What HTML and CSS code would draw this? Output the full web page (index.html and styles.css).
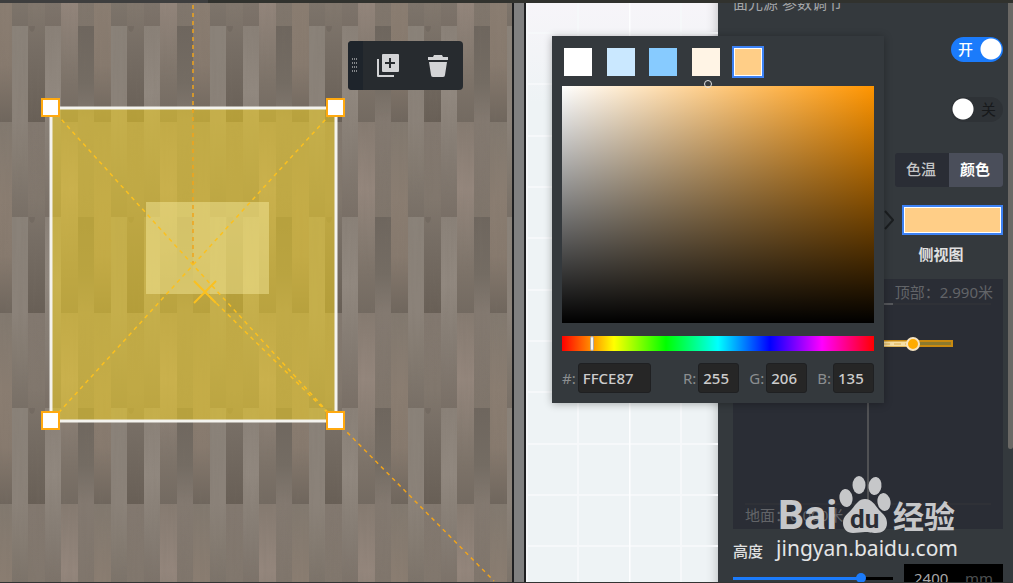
FILE: index.html
```
<!DOCTYPE html>
<html lang="zh-CN">

<head>
  <meta charset="utf-8">
  <title>面光源 参数调节</title>
  <link rel="stylesheet" href="styles.css">
</head>

<body>
  <div class="topbar"></div>
  <main class="workspace">
    <section class="plan">
      <svg class="plan-canvas" width="100%" height="100%">
        <defs>
          <linearGradient id="woodA" x2="0" y2="1">
            <stop offset="0" stop-color="#8a8178" />
            <stop offset="0.35" stop-color="#91887f" />
            <stop offset="0.65" stop-color="#867d74" />
            <stop offset="1" stop-color="#796f66" />
          </linearGradient>
          <linearGradient id="woodB" x2="0" y2="1">
            <stop offset="0" stop-color="#867b71" />
            <stop offset="0.35" stop-color="#94867c" />
            <stop offset="0.6" stop-color="#877c72" />
            <stop offset="0.8" stop-color="#7c7268" />
            <stop offset="1" stop-color="#736a61" />
          </linearGradient>
          <linearGradient id="woodC" x2="0" y2="1">
            <stop offset="0" stop-color="#6e665e" />
            <stop offset="0.3" stop-color="#746c63" />
            <stop offset="0.5" stop-color="#837970" />
            <stop offset="1" stop-color="#7f756b" />
          </linearGradient>
          <linearGradient id="woodD" x2="0" y2="1">
            <stop offset="0" stop-color="#82796f" />
            <stop offset="0.4" stop-color="#8a7d71" />
            <stop offset="0.7" stop-color="#877a6e" />
            <stop offset="1" stop-color="#6f665d" />
          </linearGradient>
          <linearGradient id="woodE" x2="0" y2="1">
            <stop offset="0" stop-color="#8a8279" />
            <stop offset="0.5" stop-color="#8b8279" />
            <stop offset="0.7" stop-color="#857c72" />
            <stop offset="1" stop-color="#786f66" />
          </linearGradient>
          <linearGradient id="woodF" x2="0" y2="1">
            <stop offset="0" stop-color="#82786f" />
            <stop offset="0.4" stop-color="#81776d" />
            <stop offset="0.6" stop-color="#776e65" />
            <stop offset="1" stop-color="#685f56" />
          </linearGradient>
          <pattern id="wood" x="45" y="23" width="99" height="191" patternUnits="userSpaceOnUse">
            <rect width="17" height="191" fill="url(#woodA)" />
            <rect x="16" y="-95" width="17" height="191" fill="url(#woodB)" />
            <rect x="16" y="96" width="17" height="191" fill="url(#woodB)" />
            <rect x="33" width="16" height="191" fill="url(#woodC)" />
            <rect x="49" y="-95" width="17" height="191" fill="url(#woodD)" />
            <rect x="49" y="96" width="17" height="191" fill="url(#woodD)" />
            <rect x="66" width="16" height="191" fill="url(#woodE)" />
            <rect x="82" y="-95" width="17" height="191" fill="url(#woodF)" />
            <rect x="82" y="96" width="17" height="191" fill="url(#woodF)" />
            <ellipse cx="86" cy="1" rx="3" ry="5" fill="#5d544c" opacity="0.25" />
          </pattern>
          <filter id="grain" x="0" y="0" width="100%" height="100%">
            <feTurbulence type="fractalNoise" baseFrequency="0.3 0.015" numOctaves="3" seed="4" />
            <feColorMatrix values="0 0 0 0 0.2  0 0 0 0 0.17  0 0 0 0 0.14  0.9 0 0 0 -0.33" />
          </filter>
        </defs>
        <rect width="100%" height="100%" fill="url(#wood)" />
        <rect width="100%" height="100%" filter="url(#grain)" opacity="0.3" />

        <rect class="light-area" x="51" y="105" width="285" height="313" />
        <rect class="light-source" x="146" y="199" width="123" height="92" />
        <g class="guides">
          <path class="axis" d="M193 2V262" />
          <path d="M51 105L193 262L336 418" />
          <path d="M336 105L51 418" />
          <path d="M205 289L336 418" />
          <path class="axis" d="M336 418L494 578" />
        </g>
        <path class="target" d="M194 278l22 22M216 278l-22 22" />
        <g class="handles">
          <rect x="42" y="96" width="17" height="17" />
          <rect x="327" y="96" width="17" height="17" />
          <rect x="42" y="409" width="17" height="17" />
          <rect x="327" y="409" width="17" height="17" />
        </g>
      </svg>

      <div class="toolbar">
        <span class="grip">
          <svg width="7" height="16" viewBox="0 0 7 16">
            <path d="M0 1h6M0 5h6M0 9h6M0 13h6" />
          </svg>
        </span>
        <button type="button" aria-label="复制">
          <svg width="24" height="24" viewBox="0 0 24 24">
            <path fill-rule="evenodd" d="M7 0h15a1 1 0 0 1 1 1v16a1 1 0 0 1-1 1H7a1 1 0 0 1-1-1V1a1 1 0 0 1 1-1zM13 4v4H9v2h4v4h2v-4h4V8h-4V4z" />
            <path d="M1 5h2v16h15v2H2a1 1 0 0 1-1-1z" />
          </svg>
        </button>
        <button type="button" aria-label="删除">
          <svg width="24" height="24" viewBox="0 0 24 24">
            <path d="M2 3h5l1-2h8l1 2h5v3H2z" />
            <path d="M3 8h18l-2 13a2 2 0 0 1-2 2H7a2 2 0 0 1-2-2z" />
          </svg>
        </button>
      </div>
    </section>

    <div class="divider"></div>

    <section class="preview">
      <svg width="100%" height="100%">
        <defs>
          <pattern id="grid" x="103" y="80" width="154" height="154" patternUnits="userSpaceOnUse">
            <path d="M0 1h154M0 53h154M0 104h154M52 0v154M103 0v154" stroke="#f6f8fa" stroke-width="2" />
            <path d="M0 0v154" stroke="#fdfeff" stroke-width="3" />
          </pattern>
        </defs>
        <rect width="100%" height="100%" fill="url(#grid)" />
      </svg>
    </section>

    <aside class="panel">
      <h2>面光源 参数调节</h2>
      <label class="switch">
        <input type="checkbox" aria-label="开" checked>
        <span>开</span>
      </label>
      <label class="switch">
        <input type="checkbox" aria-label="关">
        <span>关</span>
      </label>
      <div class="tabs">
        <label><input type="radio" name="mode"><span>色温</span></label>
        <label><input type="radio" name="mode" checked><span>颜色</span></label>
      </div>
      <div class="color-row">
        <svg width="10" height="20" viewBox="0 0 10 20">
          <path d="M1 1l8 9l-8 9" />
        </svg>
        <button type="button" class="color-button" aria-label="颜色"></button>
      </div>
      <h3>侧视图</h3>
      <div class="side-view">
        <svg width="100%" height="100%">
          <path d="M12 25h246M12 225h246" stroke="#35363a" />
          <path d="M110 25h50" stroke="#55575b" stroke-width="2" />
          <path d="M135 25v200" stroke="#505154" stroke-width="2" />
          <rect x="51" y="62" width="168" height="5" fill="#8c7a2e" stroke="#c98a10" stroke-width="2" />
          <path d="M95 65h80" stroke="#f6dfa5" stroke-width="5" />
          <path d="M95 65h80" stroke="#dcae4c" stroke-width="1" stroke-dasharray="7 4" />
          <circle cx="180" cy="65" r="6" fill="#ffab00" stroke="#f6e3c0" stroke-width="2" />
        </svg>
        <span class="ceiling">顶部：2.990米</span>
        <span class="ground">地面：0.000米</span>
      </div>
      <label class="height-label" for="height">高度</label>
      <div class="height-row">
        <input type="range" class="height-range" min="0" max="3000" value="2460" aria-label="高度">
        <div class="height-field">
          <input type="text" id="height" value="2400">
          <span>mm</span>
        </div>
      </div>
    </aside>
    <div class="scrollbar"><div class="scroll-thumb"></div></div>

    <div class="picker">
      <div class="swatches">
        <button type="button" class="white" aria-label="白色"></button>
        <button type="button" class="ice" aria-label="浅蓝"></button>
        <button type="button" class="sky" aria-label="天蓝"></button>
        <button type="button" class="cream" aria-label="米色"></button>
        <button type="button" class="amber selected" aria-label="暖橙"></button>
      </div>
      <div class="shade"><span class="shade-cursor"></span></div>
      <input type="range" class="hue" min="0" max="360" value="33" aria-label="色相">
      <div class="fields">
        <label for="hex">#:</label><input type="text" id="hex" class="hex" value="FFCE87">
        <label for="red" class="first">R:</label><input type="text" id="red" value="255">
        <label for="green">G:</label><input type="text" id="green" value="206">
        <label for="blue">B:</label><input type="text" id="blue" value="135">
      </div>
    </div>

    <div class="watermark">
      <div class="brand">
        <span class="bai">Bai</span>
        <span class="paw">
          <svg width="52" height="58" viewBox="0 0 52 58">
            <ellipse cx="7" cy="22" rx="6.500" ry="9" transform="rotate(-8 7 22)" />
            <ellipse cx="20" cy="9" rx="6.500" ry="9" />
            <ellipse cx="36" cy="10" rx="6.500" ry="9" transform="rotate(8 36 10)" />
            <ellipse cx="45" cy="26" rx="6.500" ry="9" transform="rotate(-10 45 26)" />
            <path d="M26 23c7 0 10 6 14 11c4 4 8 7 8 13c0 7-5 10-11 10c-5 0-7-1-11-1s-7 1-12 1c-6 0-10-4-10-10c0-7 5-9 9-14c4-5 7-10 13-10z" />
          </svg>
          <span class="du">du</span>
        </span>
        <span class="jingyan">经验</span>
      </div>
      <div class="site">jingyan.baidu.com</div>
    </div>
  </main>
  <div class="bottombar"></div>
</body>

</html>
```
FILE: styles.css
```
* {
  box-sizing: border-box;
}

body {
  display: flex;
  flex-direction: column;
  height: 100vh;
  margin: 0;
  overflow: hidden;
  background-color: #34393d;
  color: #e0e0e0;
  font-family: "Noto Sans", "Noto Sans CJK SC", sans-serif;
  font-size: 15px;
  line-height: 20px;
}

button,
input {
  margin: 0;
  padding: 0;
  border: none;
  font: inherit;
  outline: none;
}

button {
  cursor: pointer;
}

.topbar {
  height: 3px;
  background: linear-gradient(to right, #3e3e3e 208px, #31322e 208px);
}

.bottombar {
  height: 1px;
  background-color: #333;
}

.workspace {
  position: relative;
  display: flex;
  flex: 1;
  min-height: 0;
}

/* floor plan */
.plan {
  position: relative;
  flex: 8;
  min-width: 0;
  overflow: hidden;
}

.plan-canvas,
.preview svg {
  display: block;
}

.light-area {
  fill: rgba(255, 220, 30, 0.5);
  stroke: #f4f3ee;
  stroke-width: 3;
}

.light-source {
  fill: rgba(255, 245, 170, 0.4);
}

.guides path {
  fill: none;
  stroke: #fbc01f;
  stroke-width: 1.5;
  stroke-dasharray: 4 4;
}

.guides .axis {
  stroke: #f0a41c;
}

.target {
  stroke: #fbc01f;
  stroke-width: 2;
}

.handles rect {
  fill: #fff;
  stroke: #ffa90f;
  stroke-width: 2;
}

.toolbar {
  position: absolute;
  top: 38px;
  left: 348px;
  display: flex;
  height: 49px;
  border-radius: 4px;
  overflow: hidden;
  background-color: #272b2f;
}

.grip {
  display: flex;
  align-items: center;
  justify-content: center;
  width: 15px;
  background-color: #1e242b;
}

.grip path {
  stroke: #85888b;
  stroke-width: 2;
  stroke-dasharray: 1 1;
}

.toolbar button {
  display: flex;
  align-items: center;
  justify-content: center;
  width: 50px;
  background: none;
}

.toolbar button svg {
  fill: #d3d4d6;
}

.divider {
  width: 14px;
  background-color: #808080;
  border: solid #1f2022;
  border-width: 0 2px;
}

/* 3d preview */
.preview {
  flex: 3;
  min-width: 0;
  background: linear-gradient(#f7f5f9, #eef3f5 100px, #eef3f5);
  box-shadow: inset -12px 0 12px -12px rgba(0, 0, 0, 0.25);
}

/* settings panel */
.panel {
  display: flex;
  flex-direction: column;
  align-items: flex-end;
  width: 290px;
  padding: 0 5px 0 15px;
  overflow: hidden;
  background-color: #34393d;
}

.panel > * {
  flex-shrink: 0;
}

.panel h2 {
  align-self: flex-start;
  margin: -10px 0 24px;
  color: #a4a6a8;
  font-size: 15px;
  font-weight: normal;
}

.switch {
  display: flex;
  margin-bottom: 35px;
  position: relative;
}

.switch + .tabs {
  margin-top: -4px;
}

.switch input {
  appearance: none;
  width: 52px;
  height: 25px;
  border-radius: 13px;
  background: radial-gradient(circle at 12px 12px, #fff 10px, transparent 11px) #2e3236;
}

.switch input:checked {
  background: radial-gradient(circle at 40px 12px, #fff 10px, transparent 11px) #1b7bfb;
}

.switch span {
  position: absolute;
  top: 2px;
  right: 7px;
  color: #17191b;
}

.switch input:checked + span {
  right: auto;
  left: 7px;
  color: #fff;
  font-weight: 500;
}

.tabs {
  display: flex;
  margin-bottom: 18px;
  border-radius: 3px;
  overflow: hidden;
  background-color: #2a2d35;
}

.tabs input {
  position: absolute;
  appearance: none;
}

.tabs span {
  display: block;
  padding: 6px 11px 8px;
  width: 54px;
  color: #c4c5c7;
  font-weight: 500;
}

.tabs input:checked + span {
  background-color: #4a4e5a;
  color: #fff;
  font-weight: bold;
}

.color-row {
  display: flex;
  align-items: center;
  gap: 8px;
  margin-bottom: 9px;
}

.color-row path {
  fill: none;
  stroke: #1b1e20;
  stroke-width: 2;
}

.color-button {
  width: 101px;
  height: 30px;
  border: 2px solid #3d82f5;
  background-color: #ffce87;
  box-shadow: inset 0 0 0 1px #fff;
}

.panel h3 {
  width: 124px;
  margin: 0 0 15px;
  font-size: 15px;
  text-align: center;
}

.side-view {
  position: relative;
  width: 100%;
  height: 250px;
  margin-bottom: 12px;
  background-color: #2a2d35;
  color: #626468;
}

.ceiling,
.ground {
  position: absolute;
}

.ceiling {
  top: 3px;
  right: 10px;
}

.ground {
  bottom: 4px;
  left: 12px;
}

.height-label {
  align-self: flex-start;
  margin-bottom: 3px;
  font-weight: 500;
}

.height-row {
  display: flex;
  align-items: center;
  gap: 11px;
  width: 100%;
}

.height-range {
  appearance: none;
  flex: 1;
  min-width: 0;
  height: 3px;
  background: linear-gradient(to right, #1b7bfb 80%, #000 80%);
}

.height-range::-webkit-slider-thumb {
  appearance: none;
  width: 10px;
  height: 10px;
  border-radius: 50%;
  background-color: #1b7bfb;
}

.height-field {
  display: flex;
  align-items: center;
  width: 99px;
  height: 28px;
  padding: 0 10px;
  background-color: #000;
  color: #4c4e50;
}

.height-field input {
  flex: 1;
  min-width: 0;
  background: none;
  color: #a8a8a8;
}

.scrollbar {
  width: 5px;
  background-color: #34393d;
}

.scroll-thumb {
  height: 77%;
  border-radius: 0 0 3px 3px;
  background-color: #6a6865;
}

/* colour picker */
.picker {
  position: absolute;
  top: 33px;
  right: 129px;
  width: 332px;
  padding: 12px 10px 9px;
  background-color: #34393d;
  box-shadow: 0 1px 8px rgba(0, 0, 0, 0.3);
}

.swatches {
  display: flex;
  justify-content: space-between;
  width: 198px;
  margin: 0 2px 10px;
}

.swatches button {
  width: 28px;
  height: 28px;
}

.white {
  background-color: #fff;
}

.ice {
  background-color: #cae8ff;
}

.sky {
  background-color: #87cbff;
}

.cream {
  background-color: #fff4e5;
}

.amber {
  background-color: #ffce87;
}

.swatches .selected {
  border: 1px solid #fff;
  box-shadow: 0 0 0 2px #3d82f5;
}

.shade {
  position: relative;
  height: 237px;
  background: linear-gradient(transparent, #000), linear-gradient(to right, #fff, #ff9500);
}

.shade-cursor {
  position: absolute;
  top: -6px;
  left: 142px;
  width: 8px;
  height: 8px;
  border: 1px solid #e4e4e4;
  border-radius: 50%;
}

.hue {
  appearance: none;
  display: block;
  width: 100%;
  height: 15px;
  margin: 13px 0 12px;
  background: linear-gradient(to right, #f00, #ff0, #0f0, #0ff, #00f, #f0f, #f00);
}

.hue::-webkit-slider-thumb {
  appearance: none;
  width: 4px;
  height: 15px;
  border: 1px solid #aaa;
  border-radius: 2px;
  background-color: #f5f5f5;
}

.fields {
  display: flex;
  align-items: center;
  margin-bottom: 1px;
  color: #8b8e90;
}

.fields label {
  margin-left: 10px;
}

.fields label:first-child {
  margin-left: 0;
}

.fields .first {
  margin-left: auto;
}

.fields input {
  width: 41px;
  height: 30px;
  margin-left: 2px;
  padding: 0 4px;
  border: 1px solid #1f2022;
  border-radius: 3px;
  background-color: #262626;
  color: #ccc;
  font-weight: 500;
}

.fields .hex {
  width: 73px;
}

/* watermark */
.watermark {
  position: absolute;
  right: 55px;
  bottom: 20px;
  color: #e4e5e6;
  pointer-events: none;
}

.brand {
  display: flex;
  align-items: flex-end;
  gap: 2px;
  height: 58px;
  margin-left: 2px;
  color: #c6c7c9;
}

.bai {
  font: bold 41px/38px Roboto, sans-serif;
}

.paw {
  position: relative;
  display: flex;
  fill: #c6c7c9;
}

.du {
  position: absolute;
  bottom: 1px;
  left: 11px;
  color: #2b2e35;
  font: bold 26px/28px Roboto, sans-serif;
}

.jingyan {
  font: bold 31px/38px "Noto Sans CJK SC", sans-serif;
}

.site {
  font-size: 21px;
  line-height: 28px;
}
```
